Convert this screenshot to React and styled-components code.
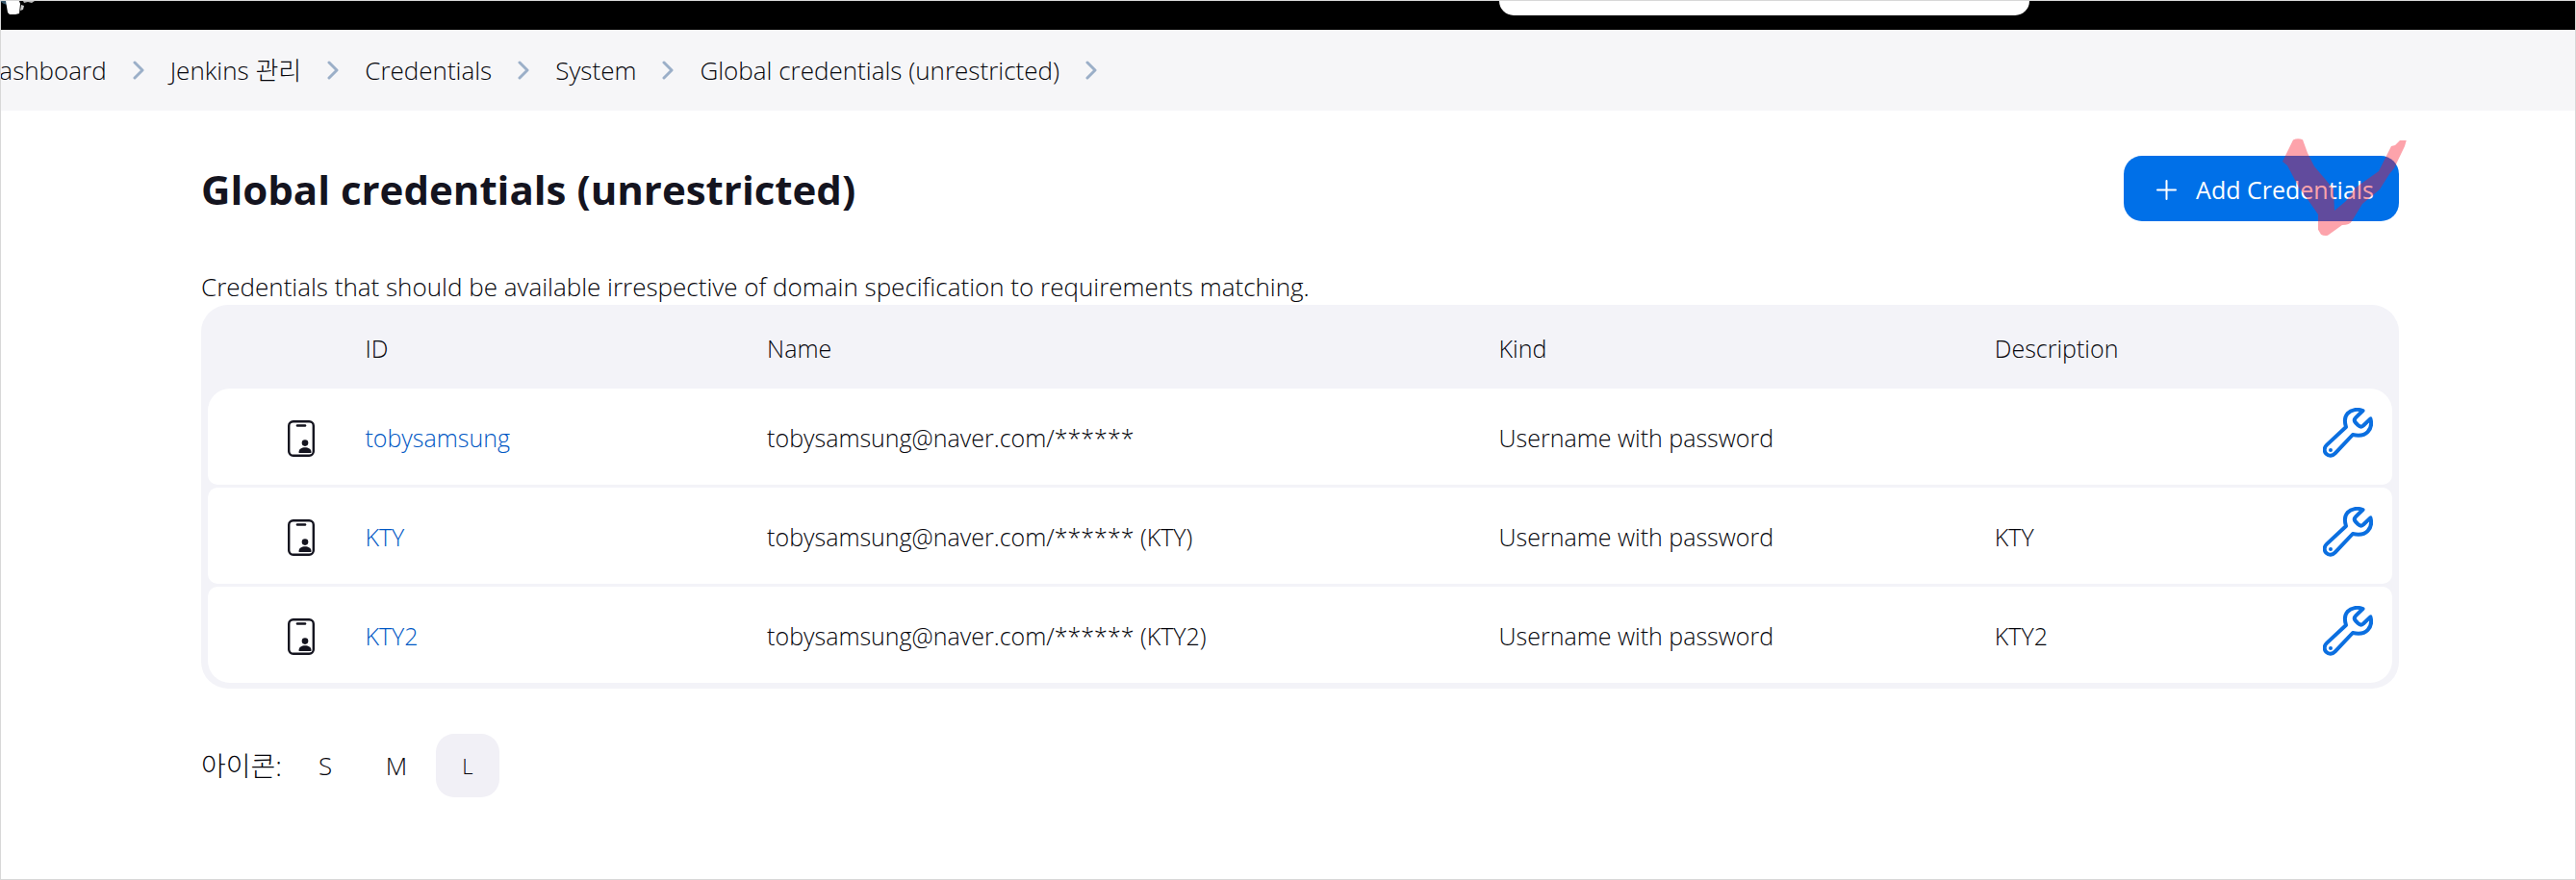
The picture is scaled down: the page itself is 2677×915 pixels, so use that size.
import React from 'react';
import styled, { createGlobalStyle } from 'styled-components';

const GlobalStyle = createGlobalStyle`
  * {
    box-sizing: border-box;
  }

  body {
    margin: 0;
    background-color: #fff;
    color: #06060c;
    font-family: 'Open Sans', 'Noto Sans CJK KR', sans-serif;
    font-size: 25px;
    font-weight: 300;
    line-height: 36px;
  }

  a {
    color: inherit;
    text-decoration: none;
  }
`;

const Page = styled.div`
  min-height: 100vh;
  border: 1px solid #d8d8d8;
  overflow: hidden;
`;

const Header = styled.header`
  display: flex;
  justify-content: space-between;
  align-items: flex-start;
  height: 30px;
  padding-right: 21.2%;
  background-color: #000;
`;

const Search = styled.input`
  width: 551px;
  height: 15px;
  padding: 0 20px;
  border: none;
  border-radius: 0 0 17px 17px;
  background-color: #fff;
`;

const Breadcrumbs = styled.nav`
  display: flex;
  align-items: center;
  gap: 27px;
  height: 84px;
  margin-left: -20px;
  background-color: #f6f6f8;
  font-size: 26px;
  white-space: nowrap;
`;

const Main = styled.main`
  padding: 47px 183px 80px 208px;
`;

const TitleBar = styled.div`
  display: flex;
  justify-content: space-between;
  align-items: center;
  margin-bottom: 50px;
`;

const Title = styled.h1`
  margin: 0;
  padding-top: 2px;
  color: #14141f;
  font-size: 42px;
  line-height: 60px;
  font-weight: 700;
`;

const AddWrap = styled.div`
  position: relative;
`;

const AddButton = styled.button`
  display: flex;
  align-items: center;
  gap: 20px;
  height: 68px;
  padding: 2px 26px 0 34px;
  border: none;
  border-radius: 19px;
  background-color: #0070e8;
  color: #fff;
  font: inherit;
  font-weight: 400;
  cursor: pointer;
`;

const Mark = styled.svg`
  position: absolute;
  top: -18px;
  right: -9px;
  pointer-events: none;
`;

const Description = styled.p`
  margin: 0 0 1px;
  font-size: 26px;
`;

const Table = styled.table`
  width: 100%;
  padding: 3px 7px;
  border-collapse: separate;
  border-spacing: 0 3px;
  border-radius: 28px;
  background-color: #f3f3f8;
  table-layout: fixed;
`;

const Th = styled.th`
  width: ${({ $width }) => $width};
  height: 78px;
  padding: 0;
  font-weight: inherit;
  text-align: left;
`;

const Td = styled.td`
  height: 100px;
  padding: 2px 0 0;
  background-color: #fff;

  &:first-child {
    padding-left: 83px;
    border-radius: 10px 0 0 10px;
  }

  &:last-child {
    padding-right: 20px;
    padding-bottom: 10px;
    border-radius: 0 10px 10px 0;
    text-align: right;
  }

  tr:first-child > &:first-child {
    border-top-left-radius: 23px;
  }

  tr:first-child > &:last-child {
    border-top-right-radius: 23px;
  }

  tr:last-child > &:first-child {
    border-bottom-left-radius: 23px;
  }

  tr:last-child > &:last-child {
    border-bottom-right-radius: 23px;
  }

  svg {
    display: inline-block;
    vertical-align: middle;
  }
`;

const IdLink = styled.a`
  && {
    color: #0058c4;
  }
`;

const IconSizes = styled.div`
  display: flex;
  align-items: center;
  margin-top: 47px;
`;

const SizeLabel = styled.span`
  width: 96px;
  font-size: 28px;
  white-space: nowrap;
`;

const SizeButton = styled.button`
  width: 66px;
  height: 66px;
  margin-right: 8px;
  padding: 0;
  border: none;
  border-radius: 19px;
  background-color: ${({ $active }) => ($active ? '#f1f0f6' : 'transparent')};
  color: inherit;
  font: inherit;
  font-size: ${({ $active }) => ($active ? '22px' : '26px')};
  cursor: pointer;
`;

const crumbs = ['Dashboard', 'Jenkins 관리', 'Credentials', 'System', 'Global credentials (unrestricted)'];

const credentials = [
  { id: 'tobysamsung', name: 'tobysamsung@naver.com/******', kind: 'Username with password', description: '' },
  { id: 'KTY', name: 'tobysamsung@naver.com/****** (KTY)', kind: 'Username with password', description: 'KTY' },
  { id: 'KTY2', name: 'tobysamsung@naver.com/****** (KTY2)', kind: 'Username with password', description: 'KTY2' },
];

const Logo = () => (
  <svg width='56' height='16' viewBox='0 0 56 16' aria-hidden='true'>
    <path d='M0 0h7v4l-4-1-3-2z' fill='#35566b' />
    <path d='M5 0h14l1 3-1 10-4 1H9l-2-2z' fill='#fff' />
    <path d='M21 4l3 1-1 4-3 1z' fill='#ccc' />
    <path d='M23 0h12l-3 2-4-1-4 1z' fill='#bbb' />
  </svg>
);

const Chevron = () => (
  <svg width='12' height='20' viewBox='0 0 12 20' fill='none' aria-hidden='true'>
    <path d='M2 2l8 8-8 8' stroke='#9bafc8' strokeWidth='3' strokeLinecap='round' strokeLinejoin='round' />
  </svg>
);

const Plus = () => (
  <svg width='21' height='21' viewBox='0 0 21 21' aria-hidden='true'>
    <path d='M10.5 1v19M1 10.5h19' stroke='#fff' strokeWidth='2' strokeLinecap='round' />
  </svg>
);

const CredentialIcon = () => (
  <svg width='28' height='38' viewBox='0 0 28 38' aria-hidden='true'>
    <rect x='1.2' y='1.2' width='25.6' height='35.6' rx='4.5' fill='none' stroke='#14141f' strokeWidth='2.4' />
    <path d='M10 5.5h8' stroke='#14141f' strokeWidth='2.6' strokeLinecap='round' />
    <circle cx='18' cy='23.6' r='3.3' fill='#14141f' />
    <path d='M11.6 34v-1.4c0-2.8 3-4.4 6.4-4.4s6.4 1.6 6.4 4.4V34z' fill='#14141f' />
  </svg>
);

const Wrench = () => (
  <svg width='52' height='52' viewBox='0 0 52 52' fill='none' aria-hidden='true'>
    <path
      d='M41.5 3C36 .8 29.5 1.8 25.5 6c-3.2 3.8-3.4 8-1.5 14L4 38.6c-3 2.8-3 6.8-.6 9.3 2.5 2.5 6.6 2.4 9.3-.5L31 28c7 1.4 12 .8 15.5-2.900 3.700-3.800 4.300-8.800 2.900-13.700L42 18.500c-2 1.700-3.600 1.500-5.500-.4l-2.500-2.600c-1.800-1.900-1.600-3.600.2-5.400z'
      stroke='#0b6fe0'
      strokeWidth='4'
      strokeLinejoin='round'
    />
    <circle cx='8' cy='44' r='2' fill='#0b6fe0' />
  </svg>
);

const PenMark = () => (
  <Mark width='130' height='103' viewBox='0 0 130 103' aria-hidden='true'>
    <path
      d='M11 1.5Q16-1 21 1.3L26 15l7 14 12 14 8 10 1 22 12-10 10-14 24-17 13-26 4-1 5-5h6.7l-1.7 6-11 23-5 6-10 16-18 15-11 18q-2 4-10 4l-15 10.7q-4 1-7-1l-3-5V79l-9-13-11-15L5 28l-5-4z'
      fill='#fb1226'
      fillOpacity='0.39'
    />
  </Mark>
);

const App = () => {
  const [size, setSize] = React.useState('L');

  return (
    <Page>
      <GlobalStyle />
      <Header>
        <Logo />
        <Search aria-label='Search' />
      </Header>

      <Breadcrumbs>
        {crumbs.map((crumb) => (
          <React.Fragment key={crumb}>
            <a href='#'>{crumb}</a>
            <Chevron />
          </React.Fragment>
        ))}
      </Breadcrumbs>

      <Main>
        <TitleBar>
          <Title>Global credentials (unrestricted)</Title>
          <AddWrap>
            <AddButton type='button'>
              <Plus />
              Add Credentials
            </AddButton>
            <PenMark />
          </AddWrap>
        </TitleBar>

        <Description>
          Credentials that should be available irrespective of domain specification to requirements matching.
        </Description>

        <Table>
          <thead>
            <tr>
              <Th $width='7.2%' />
              <Th $width='18.4%'>ID</Th>
              <Th $width='33.5%'>Name</Th>
              <Th $width='22.7%'>Kind</Th>
              <Th>Description</Th>
              <Th $width='100px' />
            </tr>
          </thead>
          <tbody>
            {credentials.map(({ id, name, kind, description }) => (
              <tr key={id}>
                <Td>
                  <CredentialIcon />
                </Td>
                <Td>
                  <IdLink href='#'>{id}</IdLink>
                </Td>
                <Td>{name}</Td>
                <Td>{kind}</Td>
                <Td>{description}</Td>
                <Td>
                  <a href='#' aria-label={`Update ${id}`}>
                    <Wrench />
                  </a>
                </Td>
              </tr>
            ))}
          </tbody>
        </Table>

        <IconSizes>
          <SizeLabel>아이콘:</SizeLabel>
          {['S', 'M', 'L'].map((item) => (
            <SizeButton key={item} type='button' $active={item === size} onClick={() => setSize(item)}>
              {item}
            </SizeButton>
          ))}
        </IconSizes>
      </Main>
    </Page>
  );
};

export default App;
